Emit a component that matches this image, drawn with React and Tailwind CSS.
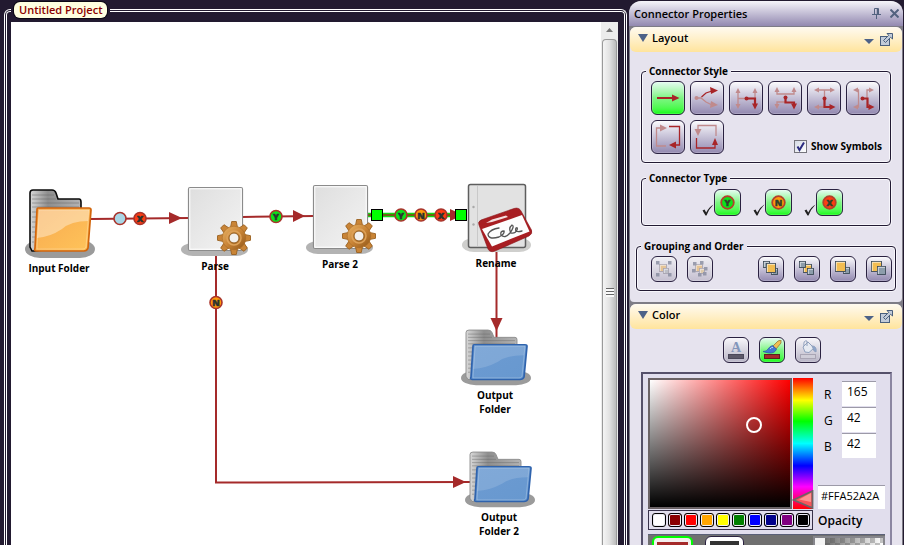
import React, { useState } from 'react';

const SYMBOLS = { Y: '#0be31a', N: '#ff9a0a', X: '#ff3c10', none: '#a9d6e5' };
const SWATCHES = ['#ffffff', '#8b0000', '#ff0000', '#ffa500', '#ffff00', '#008000', '#0000ff', '#00008b', '#800080', '#000000'];

const BTN = 'flex items-center justify-center border border-[#2a2140] rounded-md shadow-[inset_0_0_0_1px_rgba(255,255,255,0.2)]';
const PLAIN = 'bg-linear-to-b from-[#fbfbfd] to-[#9389b0]';
const GREEN = 'bg-linear-to-b from-[#e4fbf0] via-[#7df583] to-[#00fb04]';

function Symbol({ x, y, type }) {
  return (
    <g>
      <circle cx={x} cy={y} r="6" fill={SYMBOLS[type]} stroke="#a8332b" strokeWidth="1.6" />
      {type !== 'none' && (
        <text x={x} y={y + 3.5} textAnchor="middle" fontSize="9" fontWeight="800" fill="#2c3330" stroke="#2c3330" strokeWidth="0.5">{type}</text>
      )}
    </g>
  );
}

function Folder({ blue }) {
  const id = blue ? 'blue' : 'orange';
  return (
    <svg viewBox="0 0 70 74" preserveAspectRatio="none" className={blue ? 'w-[70px] h-[60px]' : 'w-[70px] h-[74px]'}>
      <defs>
        <linearGradient id={id} x1="0" y1="0" x2="1" y2="1">
          <stop offset="0" stopColor={blue ? '#6d9bd2' : '#f7a94f'} />
          <stop offset="1" stopColor={blue ? '#6798cf' : '#ffc45a'} />
        </linearGradient>
        <linearGradient id={id + 'Back'} x1="0" y1="0" x2="1" y2="0">
          <stop offset="0" stopColor="#d8d8d8" />
          <stop offset="0.35" stopColor="#8e8e8e" />
          <stop offset="1" stopColor="#b4b4b4" />
        </linearGradient>
      </defs>
      <rect y="55" width="70" height="18" rx="15" ry="9" fill="#9b9b9b" />
      <path d="M7 66 L5 62 V8 Q5 5 8 5 H27 Q30 5 31 8 L33 14 H54 Q56 14 56 17 V60 L10 66Z" fill={`url(#${id}Back)`} stroke={blue ? '#8c8c8c' : '#0a0a0a'} strokeWidth={blue ? 1 : 1.6} />
      <path d="M7 10H29M7 14H31M7 18H54M7 22H54M7 27H12M7 32H11M7 37H11M7 42H10M7 47H10M7 52H10M7 57H9" stroke="#666" strokeWidth="0.8" opacity="0.6" />
      <path d="M13 23 H64 Q66 23 66 25 L63 63 Q62 66 59 66 H11 Q9 66 10 63 L12 25 Q12 23 13 23Z" fill={`url(#${id})`} stroke={blue ? '#2f63ad' : '#d2650c'} strokeWidth="1.7" />
      <path d="M14 25 H64 L63 36 Q46 36 37 44 Q25 52 12 53Z" fill="#fff" opacity={blue ? 0.14 : 0.38} />
      <path d="M14 25 H64 L61 62 Q60 64 58 64 H12Z" fill="none" stroke="#fff" strokeWidth="0.7" opacity="0.35" />
    </svg>
  );
}

const TEETH = [0, 45, 90, 135, 180, 225, 270, 315];

function Processor() {
  return (
    <svg viewBox="0 0 70 72" className="w-[70px] h-[72px]">
      <defs>
        <linearGradient id="sheet" x1="0" y1="0" x2="1" y2="1">
          <stop offset="0" stopColor="#dedede" />
          <stop offset="0.5" stopColor="#e9e9e9" />
          <stop offset="1" stopColor="#f4f4f4" />
        </linearGradient>
        <linearGradient id="gear" x1="0" y1="0" x2="1" y2="1">
          <stop offset="0" stopColor="#e9b467" />
          <stop offset="0.5" stopColor="#c98436" />
          <stop offset="1" stopColor="#8f5517" />
        </linearGradient>
      </defs>
      <rect y="58" width="67" height="13" rx="12" ry="6.5" fill="#b3b3b3" />
      <rect x="7.5" y="2.5" width="54" height="63" rx="1.5" fill="url(#sheet)" stroke="#8b8b8b" strokeWidth="1.2" />
      <rect x="8.8" y="3.8" width="51.4" height="60.4" fill="none" stroke="#fff" />
      <g transform="translate(53 53)">
        {TEETH.map(a => (
          <path key={a} d="M-3.6 -10 L-2.3 -16.5 H2.3 L3.6 -10Z" transform={`rotate(${a})`} fill="#c98436" stroke="#9a611f" strokeWidth="0.9" />
        ))}
        <circle r="11.8" fill="url(#gear)" stroke="#a86c28" strokeWidth="0.6" />
        <circle r="7" fill="none" stroke="#dda25a" strokeWidth="1.5" />
        <circle r="5" fill="#f3f1ee" stroke="#8f5a1d" strokeWidth="1" />
      </g>
    </svg>
  );
}

function Renamer() {
  return (
    <svg viewBox="0 0 74 72" className="w-[74px] h-[72px]">
      <rect y="56" width="69" height="14" rx="12" ry="7" fill="#cfcfcd" />
      <rect x="6.5" y="2.5" width="57" height="63" rx="2" fill="#e2e2e2" stroke="#5e5e5e" strokeWidth="1.5" />
      <path d="M15.5 4V64" stroke="#c9c9c9" />
      <circle cx="11.5" cy="25" r="1.2" fill="#aaa" />
      <circle cx="11.5" cy="42.5" r="1.2" fill="#aaa" />
      <path d="M19 38 L52 26.5 Q57 25 59 29 L69.5 48 Q71 52 67 54 L33 69 Q28 71 26 67 L17 43 Q15.5 39.5 19 38Z" fill="#a81e22" stroke="#8a1318" strokeWidth="0.6" />
      <path d="M20 47 L60 33 L67.5 49.5 L30 64.5Z" fill="#fdfdfd" />
      <path d="M24 41 L30 37.5 L44 33.5 L46 35 L30 40Z" fill="#f4dede" />
      <path d="M37 46 Q29 47 26 52 Q26 58 37 55 Q43 52 42 49 Q38 49 39 53 Q43 57 48 51 Q53 44 50 43 Q46 46 49 51 Q53 52 55 48 Q56 45 54 46 Q52 51 60 49" fill="none" stroke="#555" strokeWidth="1.3" strokeLinecap="round" />
    </svg>
  );
}

function Node({ className, label, children }) {
  return (
    <div className={`absolute ${className}`}>
      {children}
      <div className="w-[68px] pt-[2px] text-center text-[10px] leading-[14px] font-bold text-black">{label}</div>
    </div>
  );
}

function Connectors() {
  return (
    <svg viewBox="0 0 590 523" className="absolute left-0 top-0 w-[590px] h-[523px]">
      <g stroke="#a52a2a" strokeWidth="2" fill="none">
        <path d="M80 197 L178 196" />
        <path d="M231 195 L303 194" />
        <path d="M205 234 V460.5 L461 460" />
        <path d="M485.5 229 V316" />
      </g>
      <path d="M357 193H456" stroke="#12d812" strokeWidth="4.5" />
      <path d="M357 193H456" stroke="#8c3a18" strokeWidth="1.6" />
      <g fill="#a52a2a">
        <path d="M158 190 L171 196 L158 202Z" />
        <path d="M282 188 L294 194 L282 200Z" />
        <path d="M439 187 L452 193 L439 199Z" />
        <path d="M442 454 L455 460 L442 466Z" />
        <path d="M479.5 296 H491.5 L485.5 309Z" />
      </g>
      <Symbol x={109} y={196.5} type="none" />
      <Symbol x={129} y={196.5} type="X" />
      <Symbol x={265} y={194.5} type="Y" />
      <Symbol x={390} y={193} type="Y" />
      <Symbol x={410} y={193} type="N" />
      <Symbol x={430} y={193} type="X" />
      <Symbol x={205} y={280.5} type="N" />
    </svg>
  );
}

function Handle({ className }) {
  return <div className={`absolute size-3 bg-[#00ff00] border border-black ${className}`} />;
}

function Group({ title, className = '', bodyClass, children }) {
  return (
    <fieldset className={`min-w-0 border border-[#221a33] rounded-[4px] shadow-[0_0_0_1px_#f7f6fb,inset_0_0_0_1px_#f7f6fb] ${className}`}>
      <legend className="ml-1 px-[3px] bg-[#e6e3ee] text-[10px] leading-[14px] font-bold">{title}</legend>
      <div className={bodyClass}>{children}</div>
    </fieldset>
  );
}

function SectionHeader({ title, open, onToggle }) {
  return (
    <div className="h-[25px] shrink-0 flex items-center pl-2 pr-[9px] rounded-md bg-linear-to-b from-[#fffaf0] to-[#ffe49c]">
      <button type="button" onClick={onToggle} aria-expanded={open} className="mb-[3px] flex items-center gap-1 text-[11px] leading-4 font-semibold">
        <svg viewBox="0 0 10 8" className="w-[10px] h-2"><path d="M0 0H10L5 8Z" fill="#4d6288" /></svg>
        {title}
      </button>
      <button type="button" aria-label={`${title} options`} className="ml-auto mt-1">
        <svg viewBox="0 0 10 5" className="w-[10px] h-[5px]"><path d="M0 0H10L5 5Z" fill="#4d6288" /></svg>
      </button>
      <button type="button" aria-label={`Detach ${title}`} className="ml-[6px]">
        <svg viewBox="0 0 13 13" className="size-[13px]" fill="none" stroke="#4a5f7d">
          <rect x="0.5" y="3.5" width="9" height="9" fill="#c2cbd8" />
          <path d="M7 0.5H12.5V6L10.7 4.3L5.5 9.5L3.5 7.5L8.7 2.3Z" fill="#c2cbd8" />
        </svg>
      </button>
    </div>
  );
}

const LIGHT = '#c08a8c';
const DARK = '#a82528';

// each style is one faded path with its heads and one strong path with its heads
const STYLES = [
  { id: 'Straight', strong: 'M6 17H23', strongHeads: 'M21 13.5L28.5 17L21 20.5Z' },
  { id: 'Curved', thin: true, faded: 'M6 17H11L16 21L22 24', fadedHeads: 'M21 20L28 24L20 27Z', strong: 'M11.5 16L16 12L22 10', strongHeads: 'M20 6L28 9.5L21 13Z', dot: [6.5, 17, true] },
  { id: 'Side vertical', faded: 'M9 11V24M9 17.5H26V11', fadedHeads: 'M6.5 12L9 7L11.5 12ZM23.5 12L26 7L28.5 12ZM6.5 23L9 28L11.5 23Z', strong: 'M17 17.5H26V24', strongHeads: 'M23 22.5L26 28.5L29 22.5Z', dot: [17.5, 17.5] },
  { id: 'Center vertical', faded: 'M9 10V13H26V10M9 24V21H18', fadedHeads: 'M6.5 11L9 6L11.5 11ZM23.5 11L26 6L28.5 11ZM6.5 23L9 28L11.5 23Z', strong: 'M17.5 16V21.5H26V24', strongHeads: 'M23 22.5L26 28.5L29 22.5Z', dot: [17.5, 16.5] },
  { id: 'Side horizontal', faded: 'M10 9H25M17.5 9V18M10 26H17', fadedHeads: 'M12 6.5L7 9L12 11.5ZM23 6.5L28 9L23 11.5ZM12 23.5L7 26L12 28.5Z', strong: 'M17.5 17V26H24', strongHeads: 'M22.5 23L28.5 26L22.5 29Z', dot: [17.5, 17.5] },
  { id: 'Center horizontal', faded: 'M10 9H12.5V26H10M24 9H21V17', fadedHeads: 'M12 6.5L7 9L12 11.5ZM23 6.5L28 9L23 11.5ZM12 23.5L7 26L12 28.5Z', strong: 'M16 17.5H21.5V26H24', strongHeads: 'M22.5 23L28.5 26L22.5 29Z', dot: [16.5, 17.5] },
  { id: 'Clockwise', thin: true, faded: 'M5.5 26V8H10M5 26H15', fadedHeads: 'M9 4.5L16 8L9 11.5Z', strong: 'M18 6.5H28.5V25H24', strongHeads: 'M25 21.5L18 25L25 28.5Z' },
  { id: 'Counter clockwise', thin: true, faded: 'M8 10V5.5H26V16', fadedHeads: 'M4.5 9L8 16L11.5 9Z', strong: 'M6.5 18V28H25V23', strongHeads: 'M22 25L25 18L28 25Z' },
];

function StyleIcon({ icon }) {
  const w = icon.thin ? 1.3 : 2.2;
  return (
    <svg viewBox="0 0 34 34" className="size-[34px] shrink-0">
      {icon.faded && <path d={icon.faded} fill="none" stroke={LIGHT} strokeWidth="1.3" />}
      {icon.fadedHeads && <path d={icon.fadedHeads} fill={LIGHT} />}
      <path d={icon.strong} fill="none" stroke={DARK} strokeWidth={w} />
      <path d={icon.strongHeads} fill={DARK} />
      {icon.dot && <circle cx={icon.dot[0]} cy={icon.dot[1]} r="2" fill={icon.dot[2] ? LIGHT : DARK} />}
    </svg>
  );
}

const GOLD = '#f2bd52';
const SLATE = '#8d9dab';

const GROUPING = [
  { id: 'Group', disabled: true, dots: [[5, 5], [17, 5], [5, 17], [17, 17]], boxes: [[8, 8, 7, '#e8bd7c'], [12, 12, 5, '#b5b8bf']] },
  { id: 'Ungroup', disabled: true, dots: [[6, 6], [13, 5], [5, 13], [17, 11], [11, 17], [16, 16]], boxes: [[8, 8, 7, '#e8bd7c'], [12, 12, 5, '#e0c79b']] },
  { id: 'Bring to front', spaced: true, boxes: [[5, 5, 6, SLATE], [13, 12, 6, SLATE], [8, 7, 9, GOLD]] },
  { id: 'Send to back', boxes: [[9, 8, 8, GOLD], [5, 5, 6, SLATE], [13, 12, 6, SLATE]] },
  { id: 'Bring forward', boxes: [[13, 11, 6, SLATE], [5, 5, 10, GOLD]] },
  { id: 'Send backward', boxes: [[5, 5, 10, GOLD], [11, 10, 8, SLATE]] },
];

function BoxesIcon({ icon }) {
  return (
    <svg viewBox="0 0 26 26" className="size-[26px] shrink-0" opacity={icon.disabled ? 0.75 : 1}>
      {icon.boxes.map(([x, y, s, fill], i) => (
        <g key={i}>
          <rect x={x + 0.5} y={y + 0.5} width={s} height={s} fill={fill} stroke={icon.disabled ? '#9b97a3' : '#3c4a58'} strokeWidth="0.9" />
          <path d={`M${x + 1.3} ${y + s} V${y + 1.3} H${x + s}`} fill="none" stroke="#fff" strokeWidth="0.9" opacity="0.7" />
        </g>
      ))}
      {icon.dots && icon.dots.map(([x, y], i) => <rect key={i} x={x} y={y} width="3.5" height="3.5" fill="#81869a" />)}
    </svg>
  );
}

function ToggleSymbol({ type, on, onClick }) {
  return (
    <div className="flex items-end">
      <svg viewBox="0 0 12 12" className="size-3">
        <path d="M0.5 6.5L2.5 5.5L4.2 8.5Q7 3 11.5 0.5Q7 5 4.5 11.5H3.5Z" fill={on ? '#222' : 'none'} />
      </svg>
      <button type="button" aria-pressed={on} aria-label={`Connector type ${type}`} onClick={onClick} className={`${BTN} ${on ? GREEN : PLAIN} size-[27px]`}>
        <svg viewBox="0 0 17 17" className="size-[17px] shrink-0">
          <circle cx="8.5" cy="8.5" r="6.3" fill={SYMBOLS[type]} stroke="#b3402c" strokeWidth="1.8" />
          <text x="8.5" y="12" textAnchor="middle" fontSize="9" fontWeight="800" fill="#30402c" stroke="#30402c" strokeWidth="0.4">{type}</text>
        </svg>
      </button>
    </div>
  );
}

function ColorPicker() {
  const [rgb, setRgb] = useState({ R: 165, G: 42, B: 42 });
  const hex = '#FF' + Object.values(rgb).map(v => v.toString(16).padStart(2, '0').toUpperCase()).join('');

  return (
    <div className="flex-1 ml-[11px] mr-[10px] mt-[9px] border-2 border-b-0 border-[#55506a] border-r-[#8b86a0] bg-[#e1deed] pt-1 px-[5px]">
      <div className="flex">
        <div className="w-[165px] shrink-0">
          <div className="flex gap-px">
            <div className="relative w-[144px] h-[131px] border-2 border-[#6a6265] bg-[linear-gradient(to_top,#000,transparent),linear-gradient(to_right,#fff,#f00)]">
              <div className="absolute left-[96px] top-[37px] size-4 rounded-full border-2 border-white" />
            </div>
            <div className="relative w-5 h-[131px] bg-[linear-gradient(to_bottom,#f00,#ff0_17%,#0f0_33%,#0ff_50%,#00f_67%,#f0f_83%,#f00)]">
              <svg viewBox="0 0 22 19" className="absolute -left-px bottom-0 w-[22px] h-[19px]">
                <path d="M1.5 10L20.5 1V18Z" fill="#f9565a" stroke="#6c6467" strokeWidth="1.8" />
                <path d="M7 9.5L19 3V12Z" fill="#ffb0a8" opacity="0.7" />
              </svg>
            </div>
          </div>
          <div className="mt-px h-[20px] flex items-center justify-center gap-[2px] border border-[#38324a]">
            {SWATCHES.map(c => (
              <button key={c} type="button" aria-label={c} style={{ backgroundColor: c }} className="size-[14px] rounded-[3px] border border-black shadow-[inset_0_0_0_1px_#ececf4]" />
            ))}
          </div>
        </div>

        <div className="pl-[5px] pt-[2px] flex-1 flex flex-col items-start">
          {Object.keys(rgb).map(ch => (
            <label key={ch} className="h-[26px] flex items-center text-[12px]">
              <span className="w-[24px] pl-[6px] pt-[3px]">{ch}</span>
              <input
                type="text"
                value={rgb[ch]}
                onChange={e => setRgb({ ...rgb, [ch]: Math.min(255, parseInt(e.target.value) || 0) })}
                className="w-[34px] h-[25px] pl-[5px] pb-1 bg-white border-t border-[#9c9aa8] text-[12px]"
              />
            </label>
          ))}
          <input type="text" aria-label="Hex colour" readOnly value={hex} className="mt-[27px] w-[67px] h-[24px] pl-[3px] pb-1 bg-white border-t border-[#9c9aa8] text-[11px]" />
          <div className="mt-1 text-[12px] leading-4 font-semibold">Opacity</div>
        </div>
      </div>

      <div className="mt-1 flex items-start h-[60px] bg-[#707070] border-t border-[#5a6078] pl-1 pt-px">
        <button type="button" aria-label="Line colour" className="w-[41px] h-[41px] rounded-md border-2 border-[#00ff00] bg-[#f4eeee] p-[3px] pt-1"><span className="block h-full bg-[#a52a2a]" /></button>
        <button type="button" aria-label="Fill colour" className="ml-[12px] w-[39px] h-[41px] rounded-md border border-[#2a2140] bg-white p-1"><span className="block h-full bg-[#333]" /></button>
        <div className="ml-auto w-[72px] h-[50px] border-2 border-[#86868c] bg-[linear-gradient(to_right,#555,transparent),repeating-conic-gradient(#c4c4c4_0_25%,#fff_0_50%)] bg-[size:100%_100%,10px_10px]">
          <div className="w-[10px] h-full bg-[#f4f4f4]" />
        </div>
      </div>
    </div>
  );
}

const COLOR_TARGETS = ['Text color', 'Line color', 'Fill color'];

function TargetIcon({ index }) {
  return (
    <svg viewBox="0 0 20 20" className="size-5 shrink-0">
      {index === 0 && (
        <g>
          <text x="10" y="12" textAnchor="middle" fontSize="14" fontWeight="700" fill="#8296bb" className="font-[Liberation_Serif,serif]">A</text>
          <rect x="2.5" y="14.5" width="15" height="4" fill="#5c5868" stroke="#4b485a" />
        </g>
      )}
      {index === 1 && (
        <g>
          <path d="M11 6L16 1L19 0L19 3L14 9Z" fill="#f0c053" stroke="#8a6a2c" strokeWidth="0.7" />
          <path d="M10.5 5.5L14.5 9Q13 13.5 7 13Q4 12.5 1 11.5Q5 11.5 6 9Q8 6 10.5 5.5Z" fill="#4378cf" stroke="#2a55a5" strokeWidth="0.7" />
          <path d="M8 9Q9.5 7 11 7.5" stroke="#b7d3fa" fill="none" />
          <rect x="2.5" y="14.5" width="15" height="4" fill="#a52a2a" stroke="#5b2020" />
        </g>
      )}
      {index === 2 && (
        <g fill="#e6eaf2" stroke="#8fa0bd">
          <path d="M5 7L10 2L16 8L11 12.5L7 12Z" />
          <path d="M6 6Q5 0 9 1V6" fill="none" />
          <path d="M14 6Q19 6 18 12Q15 11 15 8Z" fill="#8ea6cc" />
          <rect x="2.5" y="14.5" width="15" height="4" fill="#cfcdd8" stroke="#a9a5b4" />
        </g>
      )}
    </svg>
  );
}

export default function App() {
  const [style, setStyle] = useState('Straight');
  const [types, setTypes] = useState({ Y: true, N: true, X: true });
  const [showSymbols, setShowSymbols] = useState(true);
  const [target, setTarget] = useState(1);
  const [open, setOpen] = useState({ layout: true, color: true });

  return (
    <div className="h-screen overflow-hidden flex bg-[#221a30] text-black font-[Open_Sans,Noto_Sans,sans-serif]">
      <fieldset className="flex-1 min-w-0 ml-1 mr-[2px] mt-[2px] flex flex-col border-[3px] border-b-0 border-double border-white rounded-t-md pl-1 pr-[6px]">
        <legend className="px-[3px] text-[11px] leading-4 font-semibold">
          <span className="block px-[5px] rounded-md bg-[#ffffe1] text-[#8b0000] shadow-[0_0_0_1px_#0c0814]">Untitled Project</span>
        </legend>
        <div className="mt-1 flex-1 min-h-0 flex bg-white">
          <div className="relative flex-1 min-w-0 overflow-hidden">
            <Connectors />
            <Node className="left-[14px] top-[163px]" label="Input Folder"><Folder /></Node>
            <Node className="left-[170px] top-[163px]" label="Parse"><Processor /></Node>
            <Node className="left-[295px] top-[161px]" label="Parse 2"><Processor /></Node>
            <Node className="left-[451px] top-[160px]" label="Rename"><Renamer /></Node>
            <Node className="left-[450px] top-[304px]" label={<>Output<br />Folder</>}><Folder blue /></Node>
            <Node className="left-[454px] top-[426px]" label={<>Output<br />Folder 2</>}><Folder blue /></Node>
            <Handle className="left-[360px] top-[187px]" />
            <Handle className="left-[444px] top-[187px]" />
          </div>
          <div className="w-[17px] shrink-0 flex flex-col items-center bg-[#ececec] pt-[6px]">
            <svg viewBox="0 0 7 4" className="w-[7px] h-1 shrink-0"><path d="M0 4L3.5 0L7 4Z" fill="#777" /></svg>
            <div className="mt-[7px] w-[15px] flex-1 flex flex-col items-center justify-center border border-b-0 border-[#9a9a9a] rounded-t-sm bg-linear-to-r from-[#f5f5f5] via-[#e2e2e2] to-[#bcbcbc]">
              <div className="w-2 h-[9px] bg-[repeating-linear-gradient(to_bottom,#666_0_1px,#fafafa_1px_3px)]" />
            </div>
          </div>
        </div>
      </fieldset>

      <aside className="w-[274px] shrink-0 mt-px mr-px flex flex-col rounded-t-xl overflow-hidden bg-[#7e7c86]">
        <header className="h-[25px] shrink-0 flex items-center pl-[5px] pr-1 bg-linear-to-b from-[#f6f5fa] to-[#9389b0]">
          <h1 className="text-[11px] leading-4 font-semibold">Connector Properties</h1>
          <button type="button" aria-label="Pin" className="ml-auto">
            <svg viewBox="0 0 9 11" className="w-[9px] h-[11px]" fill="none" stroke="#53627f">
              <path d="M2.5 6V0.5H6.5V6M0 6.5H9M4.5 6.5V11" />
              <path d="M5.5 1V6" strokeWidth="1.5" />
            </svg>
          </button>
          <button type="button" aria-label="Close" className="ml-[9px]">
            <svg viewBox="0 0 9 9" className="size-[9px]" stroke="#53627f" strokeWidth="2"><path d="M0.5 0.5L8.5 8.5M8.5 0.5L0.5 8.5" /></svg>
          </button>
        </header>

        <section className="mt-px mx-px rounded-t-md rounded-b-sm bg-[#e6e3ee] pb-[11px]">
          <SectionHeader title="Layout" open={open.layout} onToggle={() => setOpen({ ...open, layout: !open.layout })} />
          {open.layout && (
            <div className="pt-3 px-[6px]">
              <Group title="Connector Style" className="mx-[5px] pb-2" bodyClass="pl-[9px] pr-2">
                <div className="mt-[3px] flex flex-wrap gap-[5px]">
                  {STYLES.map(s => (
                    <button key={s.id} type="button" aria-label={s.id} aria-pressed={style === s.id} onClick={() => setStyle(s.id)} className={`${BTN} ${style === s.id ? GREEN : PLAIN} size-[34px]`}>
                      <StyleIcon icon={s} />
                    </button>
                  ))}
                  <label className="ml-auto self-end pb-[1px] flex items-center gap-1 text-[10px] leading-[14px] font-bold">
                    <input type="checkbox" checked={showSymbols} onChange={e => setShowSymbols(e.target.checked)} className="peer appearance-none size-[13px] border border-[#75747c] bg-[#f4f4f8] checked:bg-[linear-gradient(135deg,#d4d9e4,#fff)]" />
                    <svg viewBox="0 0 13 13" className="-ml-[17px] size-[13px] pointer-events-none opacity-0 peer-checked:opacity-100"><path d="M3.5 6.5L5.5 10L10 2.5" fill="none" stroke="#2a2a80" strokeWidth="2" /></svg>
                    Show Symbols
                  </label>
                </div>
              </Group>
              <Group title="Connector Type" className="mx-[5px] mt-2 pb-[9px]">
                <div className="mt-1 flex justify-center gap-3 pl-3">
                  {Object.keys(types).map(t => (
                    <ToggleSymbol key={t} type={t} on={types[t]} onClick={() => setTypes({ ...types, [t]: !types[t] })} />
                  ))}
                </div>
              </Group>
              <Group title="Grouping and Order" className="mt-[13px] pb-2" bodyClass="pl-[14px] pr-[3px]">
                <div className="mt-[3px] flex gap-[10px]">
                  {GROUPING.map(g => (
                    <button key={g.id} type="button" aria-label={g.id} disabled={g.disabled} className={`${BTN} size-[26px] ${g.spaced ? 'ml-auto' : ''} ${g.disabled ? 'bg-linear-to-b from-[#f0eff4] to-[#c4bfd0]' : PLAIN}`}>
                      <BoxesIcon icon={g} />
                    </button>
                  ))}
                </div>
              </Group>
            </div>
          )}
        </section>

        <section className="mt-[2px] mx-px flex-1 flex flex-col rounded-t-md bg-[#e6e3ee]">
          <SectionHeader title="Color" open={open.color} onToggle={() => setOpen({ ...open, color: !open.color })} />
          {open.color && (
            <>
              <div className="mt-2 flex justify-center gap-[10px] pl-[11px]">
                {COLOR_TARGETS.map((t, i) => (
                  <button key={t} type="button" aria-label={t} aria-pressed={target === i} onClick={() => setTarget(i)} className={`${BTN} size-[26px] ${target === i ? GREEN : 'bg-linear-to-b from-[#f7f6fa] to-[#b9b5c6]'}`}>
                    <TargetIcon index={i} />
                  </button>
                ))}
              </div>
              <ColorPicker />
            </>
          )}
        </section>
      </aside>
    </div>
  );
}
